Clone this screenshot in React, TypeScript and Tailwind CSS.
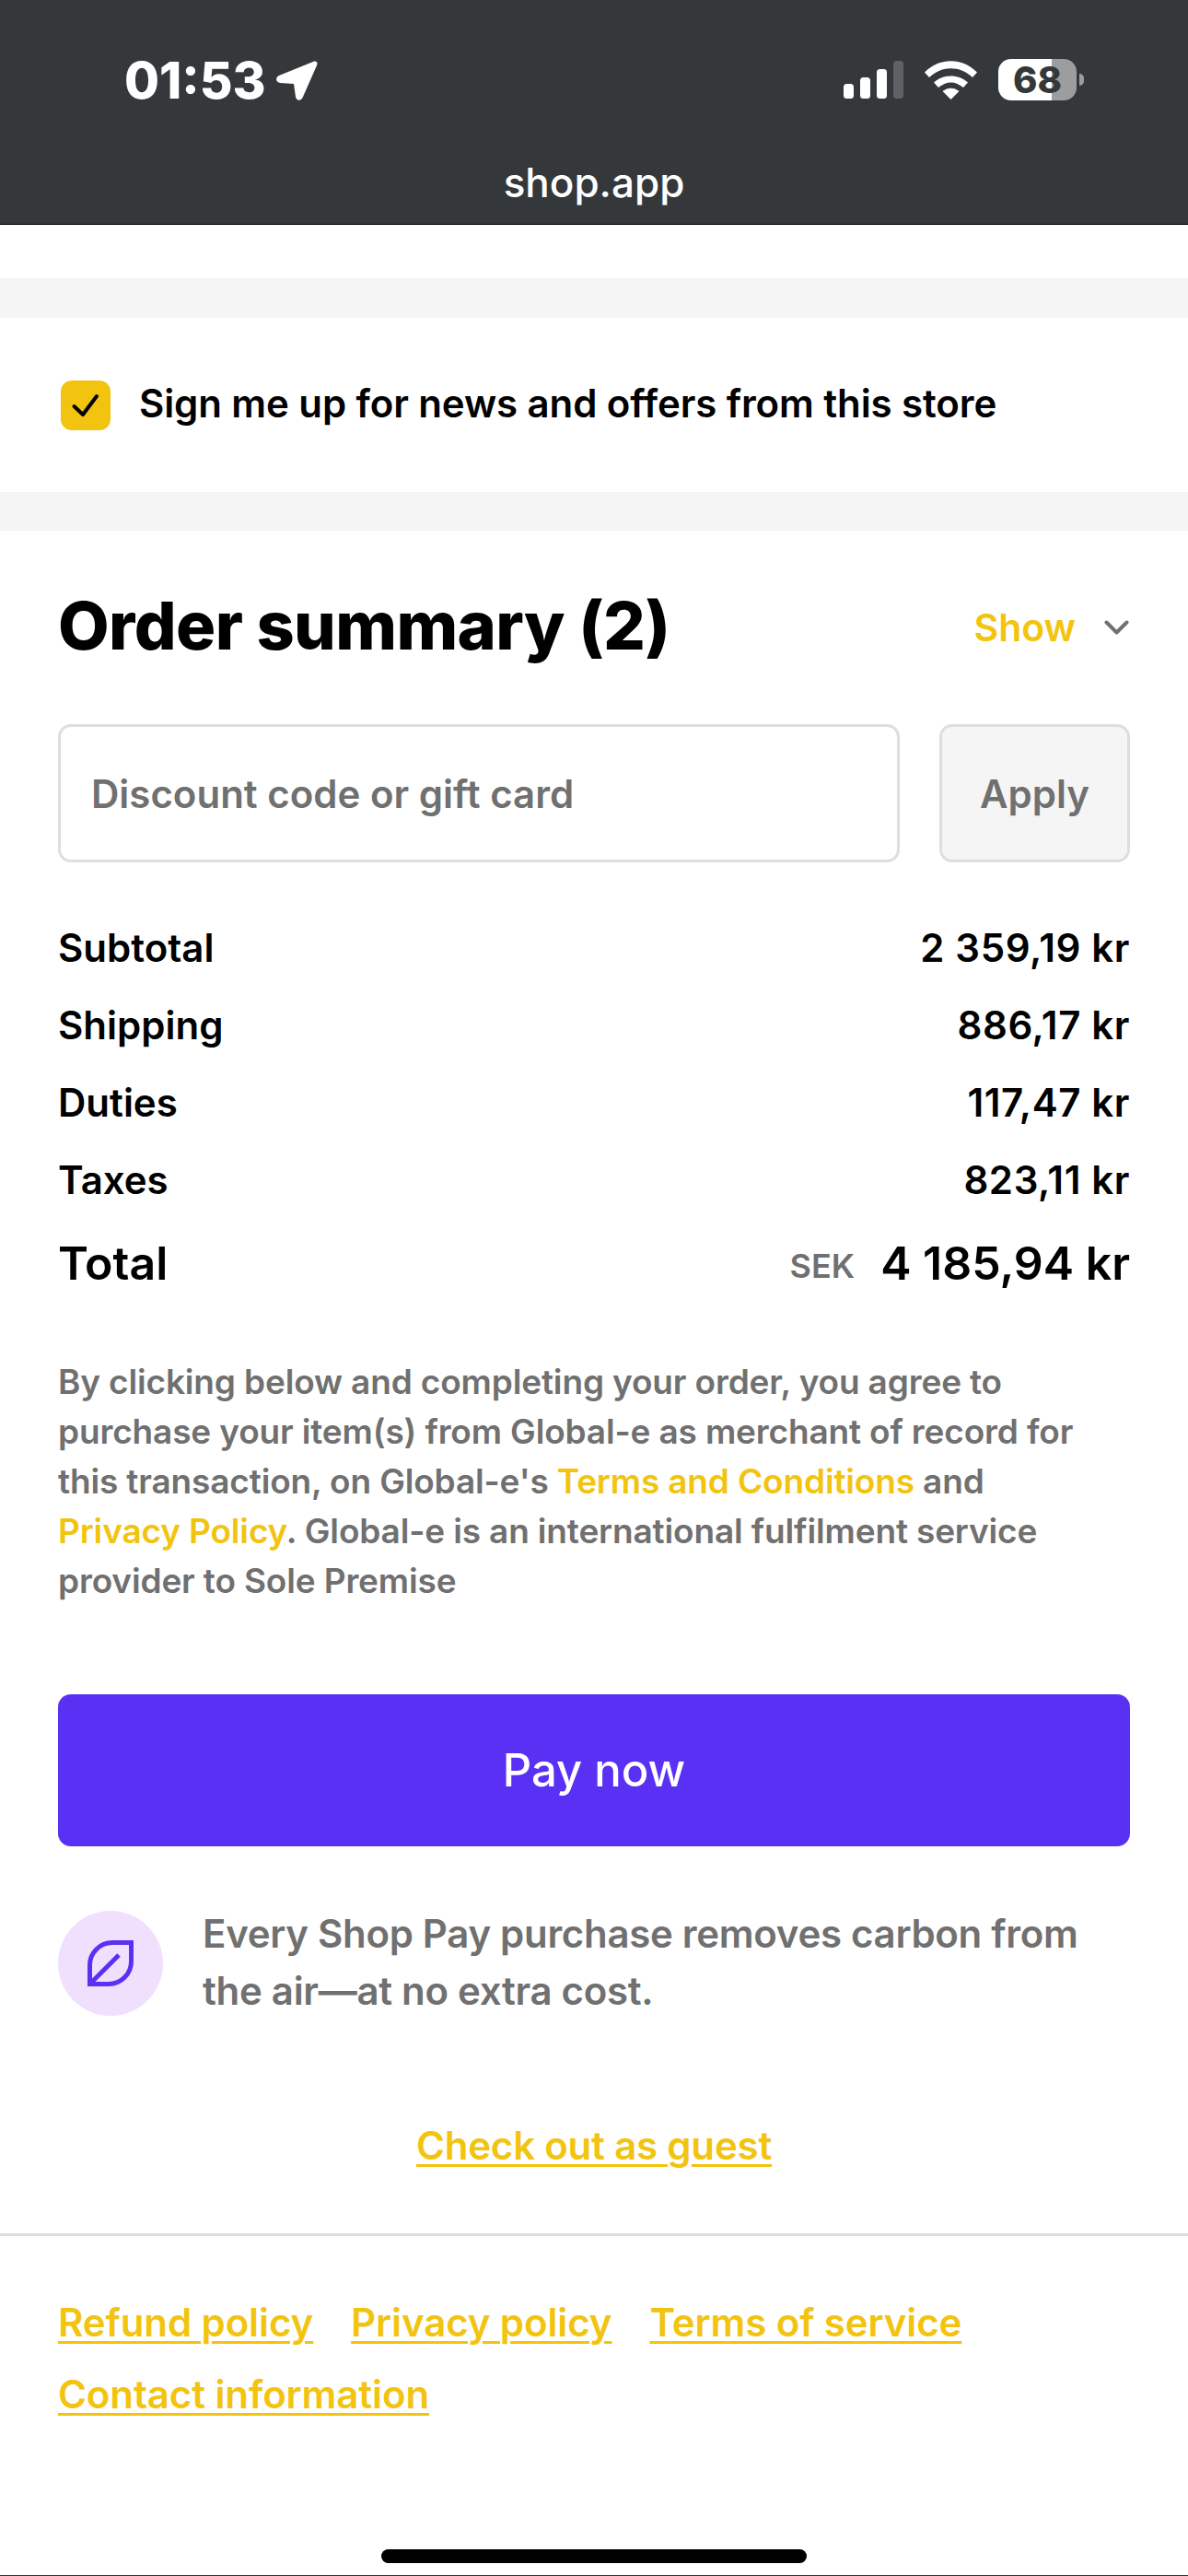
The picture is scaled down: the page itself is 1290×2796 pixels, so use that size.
import { type ReactNode } from "react";

const yellow = "text-[#f2c40f]";

const rows = [
  { label: "Subtotal", value: "2 359,19 kr" },
  { label: "Shipping", value: "886,17 kr" },
  { label: "Duties", value: "117,47 kr" },
  { label: "Taxes", value: "823,11 kr" },
];

function GrayBand({ className }: { className: string }) {
  return <div className={`w-full bg-[#f5f5f5] ${className}`} />;
}

function FooterLink({ children }: { children: ReactNode }) {
  return <a className={`leading-[78px] underline underline-offset-[5px] decoration-[length:3px] ${yellow}`}>{children}</a>;
}

function StatusBar() {
  return (
    <div className="flex h-[244px] flex-col border-b border-black bg-[#35383b] text-white">
      <div className="flex h-[172px] items-start justify-between pl-[135px] pr-[113px] pt-[60px]">
        <div className="flex items-center gap-[11px]">
          <span className="text-[55px] leading-[54px] font-extrabold">01:53</span>
          <svg width="45" height="43" viewBox="0 0 45 43" fill="#fff">
            <path d="M40 1C43.500 -0.500 45.500 2 44 5L29 39C27 44 22 44 21 39L19 25L4 24C-1 23 -1 18 3 16Z" />
          </svg>
        </div>
        <div className="flex items-center pt-[4px]">
          <svg width="65" height="41" viewBox="0 0 65 41" fill="#fff" className="mr-[23px]">
            <rect x="0" y="25" width="11" height="16" rx="3.500" />
            <rect x="18" y="18" width="11" height="23" rx="3.500" />
            <rect x="36" y="9" width="11" height="32" rx="3.500" />
            <rect x="54" y="0" width="11" height="41" rx="3.500" fill="#5f6164" />
          </svg>
          <svg width="57" height="42" viewBox="0 0 57 42" fill="#fff" className="mr-[23px]">
            <path d="M0 12.500C16 -4 41 -4 57 12.500L52 18C38.500 5 18.500 5 5 18Z" />
            <path d="M10 23.500C20 14 37 14 47 23.500L42 29C33.500 21.500 23.500 21.500 15 29Z" />
            <path d="M19.500 33C25 28.500 32 28.500 37.500 33L28.500 42Z" />
          </svg>
          <div className="relative flex h-[45px] w-[85px] items-center justify-center rounded-[14px] bg-[linear-gradient(90deg,#fff_68%,#9c9d9f_68%)]">
            <span className="text-[40px] leading-none font-extrabold text-[#35383b]">68</span>
          </div>
          <div className="ml-[3px] h-[13px] w-[5px] rounded-r-full bg-[#9c9d9f]" />
        </div>
      </div>
      <div className="flex flex-1 justify-center">
        <span className="text-[44px] leading-[52px] font-medium">shop.app</span>
      </div>
    </div>
  );
}

export default function App() {
  return (
    <div className="flex h-[2796px] w-[1290px] flex-col overflow-hidden bg-white font-[Inter,sans-serif] text-black">
      <StatusBar />
      <div className="h-[58px]" />
      <GrayBand className="h-[43px]" />

      <div className="flex h-[189px] items-center gap-[31px] pl-[66px]">
        <div className="flex h-[54px] w-[54px] items-center justify-center rounded-[12px] bg-[#f2c40f]">
          <svg width="54" height="54" viewBox="0 0 54 54" fill="none" stroke="#000" strokeWidth="4" strokeLinecap="round" strokeLinejoin="round">
            <path d="M14.500 28L24 37L39 17" />
          </svg>
        </div>
        <span className="pb-[3px] text-[42px] leading-[50px] font-semibold tracking-[-0.1px]">Sign me up for news and offers from this store</span>
      </div>

      <GrayBand className="h-[42px]" />

      <section className="px-[63px]">
        <div className="flex items-center justify-between pt-[63px]">
          <h1 className="text-[72px] leading-[80px] font-extrabold tracking-[-0.6px]">Order summary (2)</h1>
          <div className="mr-[1px] flex items-center gap-[31px] pt-[3px]">
            <span className={`text-[41px] leading-[50px] font-semibold ${yellow}`}>Show</span>
            <svg width="27" height="16" viewBox="0 0 27 16" fill="none" stroke="#707070" strokeWidth="4" strokeLinecap="round" strokeLinejoin="round">
              <path d="M2.500 2.500L13.500 13.500L24.500 2.500" />
            </svg>
          </div>
        </div>

        <div className="mt-[67px] flex gap-[43px]">
          <div className="flex h-[150px] flex-1 items-center rounded-[14px] border-[3px] border-[#dedede] pl-[33px] text-[42px] font-semibold text-[#707070]">
            Discount code or gift card
          </div>
          <div className="flex h-[150px] w-[207px] items-center justify-center rounded-[14px] border-[3px] border-[#dedede] bg-[#f5f5f5] text-[42px] font-semibold text-[#707070]">
            Apply
          </div>
        </div>

        <div className="mt-[50px]">
          {rows.map(row => (
            <div key={row.label} className="flex h-[84px] items-center justify-between text-[42px] font-semibold">
              <span>{row.label}</span>
              <span className="tracking-[0.6px]">{row.value}</span>
            </div>
          ))}
          <div className="flex h-[92px] items-center justify-between pt-[6px]">
            <span className="text-[50px] font-semibold">Total</span>
            <div className="flex items-center gap-[28px]">
              <span className="mt-[6px] text-[36px] font-semibold text-[#707070]">SEK</span>
              <span className="text-[50px] font-semibold">4 185,94 kr</span>
            </div>
          </div>
        </div>

        <p className="mt-[59px] text-[37px] leading-[54px] font-semibold tracking-[-0.15px] text-[#707070]">
          By clicking below and completing your order, you agree to purchase your item(s) from Global-e as merchant of record for this transaction, on Global-e's{" "}
          <span className={yellow}>Terms and Conditions</span> and <span className={`whitespace-nowrap ${yellow}`}>Privacy Policy</span>. Global-e is an international fulfilment service provider to Sole Premise
        </p>

        <div className="mt-[96px] flex h-[165px] items-center justify-center rounded-[14px] bg-[#5a31f4] text-[49px] font-medium text-white">Pay now</div>

        <div className="mt-[64px] flex items-center gap-[43px]">
          <div className="flex h-[114px] w-[114px] shrink-0 items-center justify-center rounded-full bg-[#f0e0fd]">
            <svg width="50" height="50" viewBox="0 0 50 50" fill="none" stroke="#5a31f4" strokeWidth="5">
              <path d="M2.500 47.500V27A24.500 24.500 0 0 1 27 2.500H47.500V23A24.500 24.500 0 0 1 23 47.500Z" />
              <path d="M4 46L34 16" />
            </svg>
          </div>
          <p className="pb-[2px] text-[42px] leading-[62px] font-semibold tracking-[-0.3px] text-[#707070]">Every Shop Pay purchase removes carbon from the air—at no extra cost.</p>
        </div>

        <div className="mt-[105px] flex justify-center">
          <a className={`text-[42px] leading-[60px] font-semibold tracking-[-0.2px] underline underline-offset-[5px] decoration-[length:3px] ${yellow}`}>Check out as guest</a>
        </div>
      </section>

      <div className="mt-[65px] h-[3px] bg-[#dedede]" />

      <div className="flex flex-wrap gap-x-[41px] px-[63px] pt-[55px] text-[42px] font-semibold tracking-[-0.1px]">
        <FooterLink>Refund policy</FooterLink>
        <FooterLink>Privacy policy</FooterLink>
        <FooterLink>Terms of service</FooterLink>
        <FooterLink>Contact information</FooterLink>
      </div>

      <div className="mt-[129px] flex justify-center">
        <div className="h-[15px] w-[462px] rounded-full bg-black" />
      </div>
      <div className="flex-1" />
      <div className="h-[1px] bg-[#333]" />
    </div>
  );
}
